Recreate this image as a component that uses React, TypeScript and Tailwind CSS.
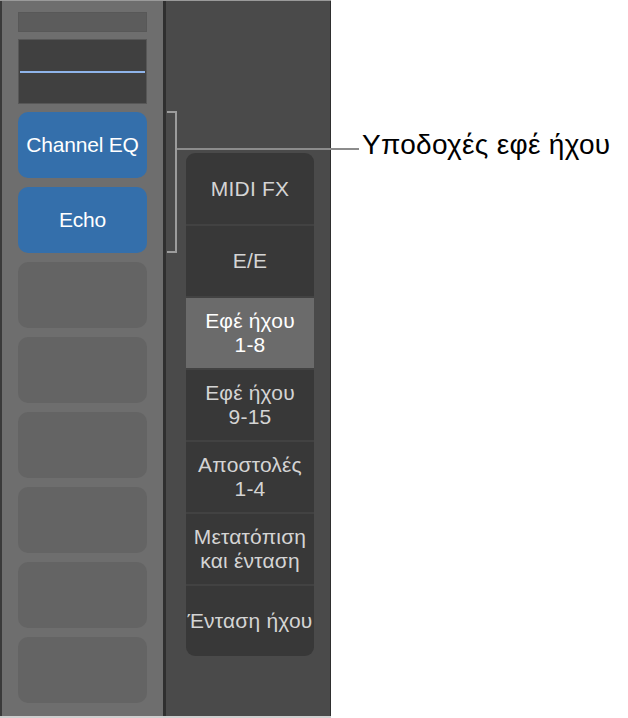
const FONT = { fontFamily: '"Liberation Sans", Arial, sans-serif' };

const MENU = [
  { label: ["MIDI FX"] },
  { label: ["E/E"] },
  { label: ["Εφέ ήχου", "1-8"], active: true },
  { label: ["Εφέ ήχου", "9-15"] },
  { label: ["Αποστολές", "1-4"] },
  { label: ["Μετατόπιση", "και ένταση"] },
  { label: ["Ένταση ήχου"] },
];

const PLUGINS = ["Channel EQ", "Echo"];

function Slot({ name }: { name?: string }) {
  if (name) {
    return (
      <div className="h-[66px] rounded-[10px] bg-[#346fab] flex items-center justify-center text-white text-[21px] tracking-[-0.2px]">
        {name}
      </div>
    );
  }
  return <div className="h-[66px] rounded-[10px] bg-[#646464]" />;
}

export default function App() {
  const empty = Array.from({ length: 6 });
  return (
    <div className="relative w-[628px] h-[718px] bg-white flex" style={FONT}>
      <div className="flex h-full w-[331px] border-t border-[#9a9a9a] border-b-2 border-b-[#cfcfcf]">
        {/* channel strip inserts */}
        <div className="w-[163px] h-full bg-[#6e6e6e] border-l-2 border-[#3a3a3a] pl-[16px] pr-[16px] pt-[11px] flex flex-col">
          <div className="h-[20px] bg-[#5c5c5c] border border-[#585858]" />
          <div className="mt-[7px] h-[65px] bg-[#404040] border border-[#575757] flex items-center px-[1px]">
            <div className="h-[2px] w-full bg-[#8fb4ea]" />
          </div>
          <div className="mt-[8px] flex flex-col gap-[9px]">
            {PLUGINS.map((p) => (
              <Slot key={p} name={p} />
            ))}
            {empty.map((_, i) => (
              <Slot key={i} />
            ))}
          </div>
        </div>

        {/* view menu */}
        <div className="flex-1 h-full bg-[#4a4a4a] border-l-[3px] border-[#2f2f2f] border-r border-r-[#2f2f2f] pl-[20px] pt-[152px]">
          <div className="w-[128px] rounded-[9px] bg-[#383838] overflow-hidden">
            {MENU.map((item, i) => (
              <div
                key={i}
                className={
                  "flex flex-col items-center justify-center text-[21px] leading-[24px] tracking-[0.2px] " +
                  (i === 0 ? "h-[71px] " : "h-[72px] border-t-2 border-[#424242] ") +
                  (item.active ? "bg-[#6b6b6b] text-white" : "text-[#d4d4d4]")
                }
              >
                {item.label.map((l) => (
                  <span key={l} className="whitespace-nowrap">
                    {l}
                  </span>
                ))}
              </div>
            ))}
          </div>
        </div>
      </div>

      {/* callout bracket */}
      <div className="absolute left-[167px] top-[111px] w-[10px] h-[142px] border-2 border-l-0 border-[#9c9c9c]" />
      <div className="absolute left-[177px] top-[148px] w-[182px] h-[2px] bg-[#8c8c8c]" />
      <div className="absolute left-[362px] top-[128px] text-[28px] leading-[34px] tracking-[0.3px] text-black whitespace-nowrap">
        Υποδοχές εφέ ήχου
      </div>
    </div>
  );
}
